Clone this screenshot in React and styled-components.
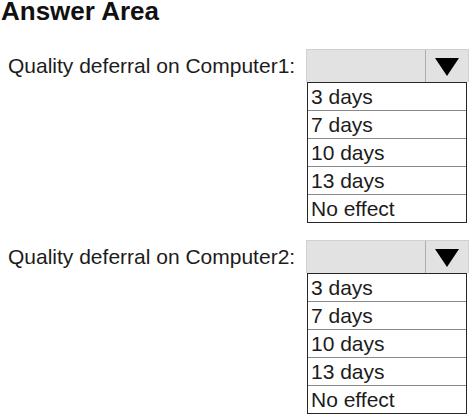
import React from 'react';
import styled, { createGlobalStyle } from 'styled-components';

const GlobalStyle = createGlobalStyle`
  body {
    margin: 0;
    background: #ffffff;
    font-family: "Liberation Sans", Arial, sans-serif;
    color: #1c1c1c;
  }
`;

const Page = styled.div`
  width: 469px;
  height: 417px;
  overflow: hidden;
  display: flex;
  flex-direction: column;
`;

const Title = styled.h1`
  margin: 0 0 27px 1px;
  font-size: 26px;
  line-height: 22px;
  font-weight: bold;
  color: #111;
`;

const Group = styled.div`
  display: flex;
  align-items: flex-start;
  margin-bottom: ${({ $gap }) => $gap || 0}px;
`;

const Label = styled.div`
  box-sizing: border-box;
  width: 306px;
  padding-left: 8px;
  font-size: 21px;
  line-height: 33px;
  white-space: nowrap;
`;

const Picker = styled.div`
  display: flex;
  flex-direction: column;
`;

const Select = styled.div`
  box-sizing: border-box;
  width: 163px;
  height: 33px;
  display: flex;
  background: #e2e2e2;
  border: 1px solid #d0d0d0;
  border-bottom: none;
`;

const Value = styled.div`
  flex: 1;
  border-right: 1px solid #adadad;
`;

const ArrowBox = styled.div`
  width: 42px;
  display: flex;
  align-items: center;
  justify-content: center;
  padding-top: 2px;
`;

const Options = styled.ul`
  box-sizing: border-box;
  list-style: none;
  margin: 0 0 0 1px;
  padding: 0;
  width: 160px;
  border: 1px solid #262626;
  background: #fff;
`;

const Option = styled.li`
  height: 27px;
  padding-left: 3px;
  font-size: 21px;
  line-height: 27px;
  & + & {
    border-top: 1px solid #8a8a8a;
  }
`;

const choices = ['3 days', '7 days', '10 days', '13 days', 'No effect'];

const Arrow = () => (
  <svg width="24" height="18" viewBox="0 0 24 18">
    <polygon points="0,0 24,0 12,18" fill="#000" />
  </svg>
);

const Dropdown = ({ label, gap }) => (
  <Group $gap={gap}>
    <Label>{label}</Label>
    <Picker>
      <Select>
        <Value />
        <ArrowBox>
          <Arrow />
        </ArrowBox>
      </Select>
      <Options>
        {choices.map((c) => (
          <Option key={c}>{c}</Option>
        ))}
      </Options>
    </Picker>
  </Group>
);

export default function App() {
  return (
    <Page>
      <GlobalStyle />
      <Title>Answer Area</Title>
      <Dropdown label="Quality deferral on Computer1:" gap={17} />
      <Dropdown label="Quality deferral on Computer2:" />
    </Page>
  );
}
